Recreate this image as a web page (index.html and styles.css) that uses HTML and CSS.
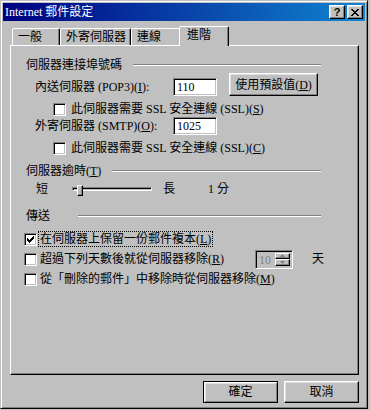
FILE: index.html
```html
<!DOCTYPE html>
<html>
<head>
<meta charset="utf-8">
<link rel="stylesheet" href="styles.css">
</head>
<body>
<div class="window">
  <div class="titlebar">
    <span class="title">Internet 郵件設定</span>
    <div class="tbtns">
      <span class="tbtn help">?</span>
      <span class="tbtn close"><svg width="8" height="7" viewBox="0 0 8 7" shape-rendering="crispEdges"><path d="M0 0h2v1h-2zM6 0h2v1h-2zM1 1h2v1h-2zM5 1h2v1h-2zM2 2h4v1h-4zM3 3h2v1h-2zM2 4h4v1h-4zM1 5h2v1h-2zM5 5h2v1h-2zM0 6h2v1h-2zM6 6h2v1h-2z" fill="#000"/></svg></span>
    </div>
  </div>
  <div class="tabs">
    <div class="tab t1">一般</div>
    <div class="tab t2">外寄伺服器</div>
    <div class="tab t3">連線</div>
    <div class="tab sel">進階</div>
  </div>
  <div class="panel">
    <div class="grp g1"><span class="glabel">伺服器連接埠號碼</span><span class="gline"></span></div>
    <div class="row port r-pop">
      <span class="plabel">內送伺服器 (POP3)(<u>I</u>):</span>
      <span class="edit">110</span>
      <span class="btn pbtn">使用預設值(<u>D</u>)</span>
    </div>
    <div class="row ssl r-ssl1"><span class="cb"></span><span class="ctext">此伺服器需要 SSL 安全連線 (SSL)(<u>S</u>)</span></div>
    <div class="row port r-smtp">
      <span class="plabel">外寄伺服器 (SMTP)(<u>O</u>):</span>
      <span class="edit">1025</span>
    </div>
    <div class="row ssl r-ssl2"><span class="cb"></span><span class="ctext">此伺服器需要 SSL 安全連線 (SSL)(<u>C</u>)</span></div>
    <div class="grp g2"><span class="glabel">伺服器逾時(<u>T</u>)</span><span class="gline"></span></div>
    <div class="row slider">
      <span>短</span>
      <span class="track"><span class="thumb"></span></span>
      <span class="long">長</span>
      <span class="val">1 分</span>
    </div>
    <div class="grp g3"><span class="glabel">傳送</span><span class="gline"></span></div>
    <div class="row chk c1">
      <span class="cb"><svg width="7" height="7" viewBox="0 0 7 7" shape-rendering="crispEdges"><path d="M6 0h1v1h-1zM5 1h2v1h-2zM0 2h1v1h-1zM4 2h3v1h-3zM0 3h2v1h-2zM3 3h3v1h-3zM0 4h5v1h-5zM1 5h3v1h-3zM2 6h1v1h-1z" fill="#000"/></svg></span>
      <span class="ctext focus">在伺服器上保留一份郵件複本(<u>L</u>)</span>
    </div>
    <div class="row chk c2">
      <span class="cb"></span>
      <span class="ctext wide">超過下列天數後就從伺服器移除(<u>R</u>)</span>
      <span class="spin"><span class="spinval">10</span><span class="spinbtns"><span class="sb"><svg width="5" height="3" viewBox="0 0 5 3"><path d="M2.5 0L5 3H0z" fill="#808080"/></svg></span><span class="sb"><svg width="5" height="3" viewBox="0 0 5 3"><path d="M0 0h5L2.5 3z" fill="#808080"/></svg></span></span></span>
      <span class="day">天</span>
    </div>
    <div class="row chk c3">
      <span class="cb"></span>
      <span class="ctext">從「刪除的郵件」中移除時從伺服器移除(<u>M</u>)</span>
    </div>
  </div>
  <div class="btnrow">
    <span class="btn dflt">確定</span>
    <span class="btn">取消</span>
  </div>
</div>
</body>
</html>
```

FILE: styles.css
```css
* { box-sizing: border-box; }
html, body { margin: 0; padding: 0; }
body {
  background: #c0c0c0;
  width: 370px;
  height: 410px;
  overflow: hidden;
  font: 12px/14px "Liberation Serif", "Noto Sans CJK TC", serif;
  color: #000;
}
u { text-decoration: underline; text-underline-offset: 1px; }

.window {
  width: 368px;
  height: 409px;
  border: 1px solid;
  border-color: #c0c0c0 #000 #000 #c0c0c0;
  box-shadow: inset 1px 1px #fff, inset -1px -1px #808080;
  padding: 2px;
  display: flex;
  flex-direction: column;
}

.titlebar {
  height: 18px;
  flex: none;
  background: linear-gradient(to right, #000080, #1084d0);
  display: flex;
  align-items: center;
  justify-content: space-between;
  color: #fff;
  padding: 0 2px 0 2px;
}
.title { line-height: 16px; }
.tbtns { display: flex; gap: 2px; }
.tbtn {
  width: 16px;
  height: 14px;
  background: #c0c0c0;
  border: 1px solid;
  border-color: #fff #000 #000 #fff;
  box-shadow: inset -1px -1px #808080, inset 1px 1px #dfdfdf;
  display: flex;
  align-items: center;
  justify-content: center;
  color: #000;
}
.help { font: bold 11px/11px "Liberation Sans", sans-serif; }

.tabs {
  display: flex;
  align-items: flex-end;
  height: 19px;
  margin: 5px 0 0 7px;
  padding-left: 2px;
  position: relative;
  z-index: 1;
  flex: none;
}
.tab {
  height: 17px;
  border: 1px solid;
  border-bottom: 0;
  border-color: #fff #000 transparent #fff;
  box-shadow: inset -1px 0 #808080;
  border-top-left-radius: 2px;
  border-top-right-radius: 2px;
  background: #c0c0c0;
  padding-left: 5px;
  line-height: 16px;
  white-space: nowrap;
}
.t1 { width: 48px; }
.t2 { width: 71px; }
.t3 { width: 50px; }
.sel {
  width: 50px;
  height: 20px;
  margin-left: -2px;
  margin-bottom: -1px;
  padding-left: 7px;
  line-height: 16px;
  position: relative;
  z-index: 2;
}

.panel {
  margin-left: 7px;
  width: 349px;
  height: 330px;
  flex: none;
  border: 1px solid;
  border-color: #fff #000 #000 #fff;
  box-shadow: inset -1px -1px #808080;
  display: flex;
  flex-direction: column;
}

.grp {
  display: flex;
  align-items: center;
  height: 14px;
  margin-left: 15px;
  width: 295px;
  flex: none;
}
.glabel { flex: none; white-space: nowrap; }
.g1 .glabel { width: 107px; }
.g2 .glabel { width: 86px; }
.g3 .glabel { width: 52px; }
.gline {
  flex: 1;
  height: 2px;
  border-top: 1px solid #808080;
  border-bottom: 1px solid #fff;
}
.g1 { margin-top: 12px; }
.g2 { margin-top: 9px; }
.g3 { margin-top: 13px; }

.row {
  display: flex;
  align-items: center;
  height: 14px;
  flex: none;
  white-space: nowrap;
}
.port { height: 18px; margin-left: 24px; }
.r-pop { margin-top: 6px; }
.r-smtp { margin-top: 1px; }
.plabel { width: 138px; flex: none; }
.edit {
  width: 44px;
  height: 18px;
  flex: none;
  background: #fff;
  border: 1px solid;
  border-color: #808080 #fff #fff #808080;
  box-shadow: inset 1px 1px #000, inset -1px -1px #c0c0c0;
  padding-left: 3px;
  line-height: 16px;
}

.btn {
  display: flex;
  align-items: center;
  justify-content: center;
  width: 75px;
  height: 22px;
  background: #c0c0c0;
  border: 1px solid;
  border-color: #fff #000 #000 #fff;
  box-shadow: inset -1px -1px #808080, inset 1px 1px #dfdfdf;
  white-space: nowrap;
}
.pbtn {
  width: 89px;
  height: 23px;
  margin-left: 12px;
  align-self: flex-start;
  margin-top: -5px;
}
.dflt {
  border-color: #000;
  box-shadow: inset 1px 1px #fff, inset -1px -1px #808080, inset 2px 2px #dfdfdf;
}

.ssl { margin-left: 42px; }
.r-ssl1 { margin-top: 6px; }
.r-ssl2 { margin-top: 6px; }
.ssl .ctext { margin-left: 5px; }

.cb {
  width: 13px;
  height: 13px;
  flex: none;
  background: #fff;
  border: 1px solid;
  border-color: #808080 #fff #fff #808080;
  box-shadow: inset 1px 1px #000, inset -1px -1px #c0c0c0;
  display: flex;
  align-items: center;
  justify-content: center;
}

.slider { margin-left: 25px; margin-top: 4px; }
.track {
  position: relative;
  width: 80px;
  height: 4px;
  margin-left: 24px;
  border: 1px solid;
  border-color: #808080 #fff #fff #808080;
  box-shadow: inset 1px 1px #000, inset -1px -1px #c0c0c0;
}
.thumb {
  position: absolute;
  left: 4px;
  top: -3px;
  width: 6px;
  height: 11px;
  background: #c0c0c0;
  border: 1px solid;
  border-color: #fff #000 #000 #fff;
  box-shadow: inset -1px -1px #808080;
}
.long { margin-left: 11px; }
.val { margin-left: 33px; }

.chk { margin-left: 13px; }
.c1 { margin-top: 9px; }
.c2 { margin-top: 6px; }
.c3 { margin-top: 6px; }
.chk .ctext { margin-left: 2px; padding: 0 1px; }
.focus { outline: 1px dotted #000; outline-offset: 0; line-height: 14px; }
.wide { width: 216px; flex: none; }

.spin {
  width: 38px;
  height: 19px;
  flex: none;
  display: flex;
  background: #c0c0c0;
  border: 1px solid;
  border-color: #808080 #fff #fff #808080;
  box-shadow: inset 1px 1px #000, inset -1px -1px #c0c0c0;
  padding: 2px 2px 2px 3px;
}
.spinval { color: #808080; line-height: 14px; flex: 1; }
.spinbtns { display: flex; flex-direction: column; width: 15px; }
.sb {
  flex: 1;
  display: flex;
  align-items: center;
  justify-content: center;
  background: #c0c0c0;
  border: 1px solid;
  border-color: #fff #000 #000 #fff;
  box-shadow: inset -1px -1px #808080;
}
.day { margin-left: 19px; }

.btnrow {
  display: flex;
  justify-content: flex-end;
  gap: 6px;
  margin: 6px 0 0 7px;
  width: 349px;
  flex: none;
}
```
